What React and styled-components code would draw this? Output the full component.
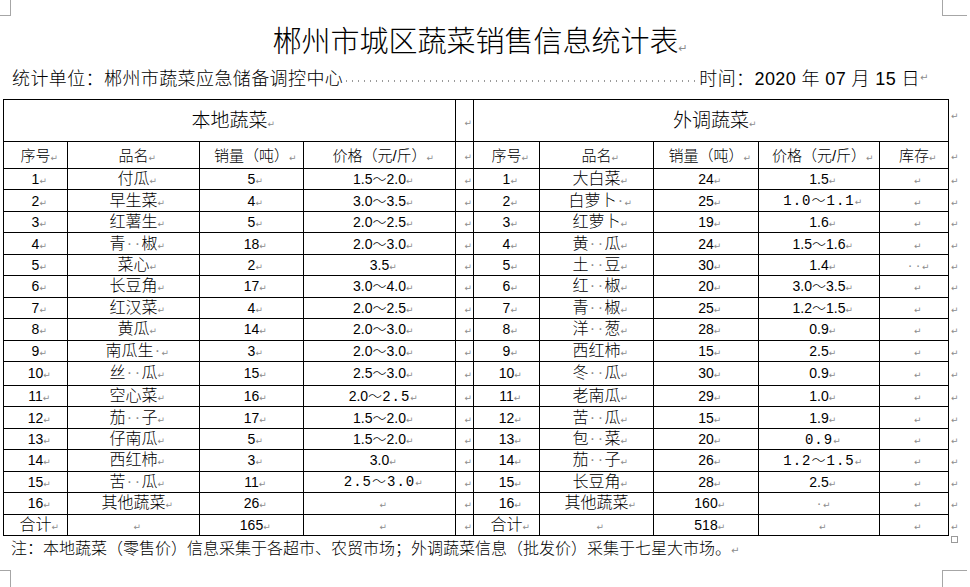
import React from "react";
import styled, { createGlobalStyle, css } from "styled-components";

const GlobalStyle = createGlobalStyle`
  html, body {
    margin: 0;
    padding: 0;
    background: #fff;
  }
  body {
    font-family: "Liberation Sans", "Noto Sans CJK SC", sans-serif;
    font-weight: 300;
    color: #000;
  }
`;

// 本地蔬菜
const local = [
  ["1", "付瓜", "5", "1.5～2.0"],
  ["2", "早生菜", "4", "3.0～3.5"],
  ["3", "红薯生", "5", "2.0～2.5"],
  ["4", "青··椒", "18", "2.0～3.0"],
  ["5", "菜心", "2", "3.5"],
  ["6", "长豆角", "17", "3.0～4.0"],
  ["7", "红汉菜", "4", "2.0～2.5"],
  ["8", "黄瓜", "14", "2.0～3.0"],
  ["9", "南瓜生·", "3", "2.0～3.0"],
  ["10", "丝··瓜", "15", "2.5～3.0"],
  ["11", "空心菜", "16", { t: "2.0～", m: "2.5" }],
  ["12", "茄··子", "17", "1.5～2.0"],
  ["13", "仔南瓜", "5", "1.5～2.0"],
  ["14", "西红柿", "3", "3.0"],
  ["15", "苦··瓜", "11", { m: "2.5～3.0" }],
  ["16", "其他蔬菜", "26", ""],
  ["合计", "", "165", ""],
];

// 外调蔬菜
const outside = [
  ["1", "大白菜", "24", "1.5", ""],
  ["2", "白萝卜·", "25", { m: "1.0～1.1" }, ""],
  ["3", "红萝卜", "19", "1.6", ""],
  ["4", "黄··瓜", "24", "1.5～1.6", ""],
  ["5", "土··豆", "30", "1.4", "··"],
  ["6", "红··椒", "20", "3.0～3.5", ""],
  ["7", "青··椒", "25", "1.2～1.5", ""],
  ["8", "洋··葱", "28", "0.9", ""],
  ["9", "西红柿", "15", "2.5", ""],
  ["10", "冬··瓜", "30", "0.9", ""],
  ["11", "老南瓜", "29", "1.0", ""],
  ["12", "苦··瓜", "15", "1.9", ""],
  ["13", "包··菜", "20", { m: "0.9" }, ""],
  ["14", "茄··子", "26", { m: "1.2～1.5" }, ""],
  ["15", "长豆角", "28", "2.5", ""],
  ["16", "其他蔬菜", "160", "·", ""],
  ["合计", "", "518", "", ""],
];

const widths = [64, 132, 104, 152, 18, 66, 114, 105, 121, 69, 20];

const Page = styled.div`
  position: relative;
  width: 970px;
  height: 587px;
  overflow: hidden;
  padding-left: 3px;
  box-sizing: border-box;
`;

const Corner = styled.div`
  position: absolute;
  border: 0 solid #a6a6a6;
  ${(p) =>
    p.$pos === "tl" &&
    css`
      left: 0;
      top: 0;
      width: 10px;
      height: 15px;
      border-right-width: 1px;
      border-bottom-width: 1px;
    `}
  ${(p) =>
    p.$pos === "tr" &&
    css`
      left: 942px;
      top: 0;
      width: 24px;
      height: 15px;
      border-left-width: 1px;
      border-bottom-width: 1px;
    `}
  ${(p) =>
    p.$pos === "bl" &&
    css`
      left: 0;
      top: 570px;
      width: 10px;
      height: 20px;
      border-right-width: 1px;
      border-top-width: 1px;
    `}
  ${(p) =>
    p.$pos === "br" &&
    css`
      left: 942px;
      top: 570px;
      width: 24px;
      height: 20px;
      border-left-width: 1px;
      border-top-width: 1px;
    `}
`;

const Handle = styled.div`
  position: absolute;
  left: 951px;
  top: 536px;
  width: 5px;
  height: 5px;
  border: 1px solid #9a9a9a;
  background: #fff;
`;

const Title = styled.h1`
  width: 945px;
  margin: 16px 0 0;
  height: 46px;
  line-height: 46px;
  text-align: center;
  font-family: "Noto Sans CJK SC", sans-serif;
  font-size: 29px;
  font-weight: 300;
`;

const Info = styled.div`
  display: flex;
  align-items: center;
  width: 945px;
  height: 30px;
  box-sizing: border-box;
  padding: 0 28px 0 9px;
  margin-bottom: 7px;
  font-size: 18px;
  letter-spacing: 0.4px;
  white-space: nowrap;
`;

const Leader = styled.span`
  flex: 1;
  height: 2px;
  margin: 8px 4px 0 3px;
  background: repeating-linear-gradient(
    to right,
    #9a9a9a 0 1.5px,
    transparent 1.5px 6px
  );
`;

const Table = styled.table`
  border-collapse: collapse;
  table-layout: fixed;
  width: 965px;
`;

const Col = styled.col`
  width: ${(p) => p.$w}px;
`;

const Row = styled.tr`
  height: ${(p) => p.$h}px;
`;

const Cell = styled.td`
  border: 1px solid #000;
  padding: 0;
  text-align: center;
  vertical-align: middle;
  white-space: nowrap;
  overflow: hidden;
  font-size: ${(p) => p.$size || 14}px;
  line-height: 1;
`;

const Edge = styled.td`
  border: none;
  padding: 0 0 0 2px;
  text-align: left;
  vertical-align: ${(p) => (p.$top ? "top" : "middle")};
  padding-top: ${(p) => (p.$top ? 6 : 0)}px;
  line-height: 1;
`;

const Mark = styled.span`
  display: inline-block;
  width: 8px;
  margin-right: -8px;
  text-align: left;
  color: #8c8c8c;
  font-family: "DejaVu Sans", sans-serif;
  font-size: ${(p) => p.$size || 9}px;
  font-weight: 400;
  letter-spacing: 0;
`;

const Dot = styled.span`
  display: inline-block;
  width: 8px;
  text-align: center;
  color: #8c8c8c;
  font-family: "Liberation Sans", sans-serif;
`;

const Mono = styled.span`
  font-family: "Liberation Mono", "Noto Sans CJK SC", monospace;
  letter-spacing: 1px;
`;

const Note = styled.p`
  margin: 0;
  padding-left: 8px;
  height: 26px;
  line-height: 26px;
  font-size: 16px;
`;

const txt = (s) =>
  s.split("").map((c, i) => (c === "·" ? <Dot key={i}>·</Dot> : c));

const price = (p) => {
  if (typeof p === "string") return txt(p);
  return (
    <>
      {p.t}
      <Mono>{p.m}</Mono>
    </>
  );
};

const isName = (s) => /[\u4e00-\u9fff]/.test(s);

export default function App() {
  return (
    <Page>
      <GlobalStyle />
      <Corner $pos="tl" />
      <Corner $pos="tr" />
      <Corner $pos="bl" />
      <Corner $pos="br" />

      <Title>
        郴州市城区蔬菜销售信息统计表
        <Mark $size={11}>↵</Mark>
      </Title>

      <Info>
        统计单位：郴州市蔬菜应急储备调控中心
        <Leader />
        时间：2020 年 07 月 15 日<Mark $size={10}>↵</Mark>
      </Info>

      <Table>
        <colgroup>
          {widths.map((w, i) => (
            <Col key={i} $w={w} />
          ))}
        </colgroup>
        <tbody>
          <Row $h={42}>
            <Cell colSpan={4} $size={19}>
              本地蔬菜<Mark>↵</Mark>
            </Cell>
            <Cell>
              <Mark>↵</Mark>
            </Cell>
            <Cell colSpan={5} $size={19}>
              外调蔬菜<Mark>↵</Mark>
            </Cell>
            <Edge $top>
              <Mark>↵</Mark>
            </Edge>
          </Row>
          <Row $h={27}>
            {["序号", "品名", "销量（吨）", "价格（元/斤）"].map((h) => (
              <Cell key={"l" + h} $size={15}>
                {h}
                <Mark>↵</Mark>
              </Cell>
            ))}
            <Cell>
              <Mark>↵</Mark>
            </Cell>
            {["序号", "品名", "销量（吨）", "价格（元/斤）", "库存"].map((h) => (
              <Cell key={"r" + h} $size={15}>
                {h}
                <Mark>↵</Mark>
              </Cell>
            ))}
            <Edge>
              <Mark>↵</Mark>
            </Edge>
          </Row>
          {local.map((l, i) => {
            const r = outside[i];
            return (
              <Row key={i} $h={i === 9 ? 24 : 21.45}>
                <Cell $size={isName(l[0]) ? 16 : 14}>
                  {l[0]}
                  <Mark>↵</Mark>
                </Cell>
                <Cell $size={16}>
                  {txt(l[1])}
                  <Mark>↵</Mark>
                </Cell>
                <Cell>
                  {l[2]}
                  <Mark>↵</Mark>
                </Cell>
                <Cell>
                  {price(l[3])}
                  <Mark>↵</Mark>
                </Cell>
                <Cell>
                  <Mark>↵</Mark>
                </Cell>
                <Cell $size={isName(r[0]) ? 16 : 14}>
                  {r[0]}
                  <Mark>↵</Mark>
                </Cell>
                <Cell $size={16}>
                  {txt(r[1])}
                  <Mark>↵</Mark>
                </Cell>
                <Cell>
                  {r[2]}
                  <Mark>↵</Mark>
                </Cell>
                <Cell>
                  {price(r[3])}
                  <Mark>↵</Mark>
                </Cell>
                <Cell>
                  {txt(r[4])}
                  <Mark>↵</Mark>
                </Cell>
                <Edge>
                  <Mark>↵</Mark>
                </Edge>
              </Row>
            );
          })}
        </tbody>
      </Table>

      <Note>
        注：本地蔬菜（零售价）信息采集于各超市、农贸市场；外调蔬菜信息（批发价）采集于七星大市场。
        <Mark $size={10}>↵</Mark>
      </Note>
      <Handle />
    </Page>
  );
}
